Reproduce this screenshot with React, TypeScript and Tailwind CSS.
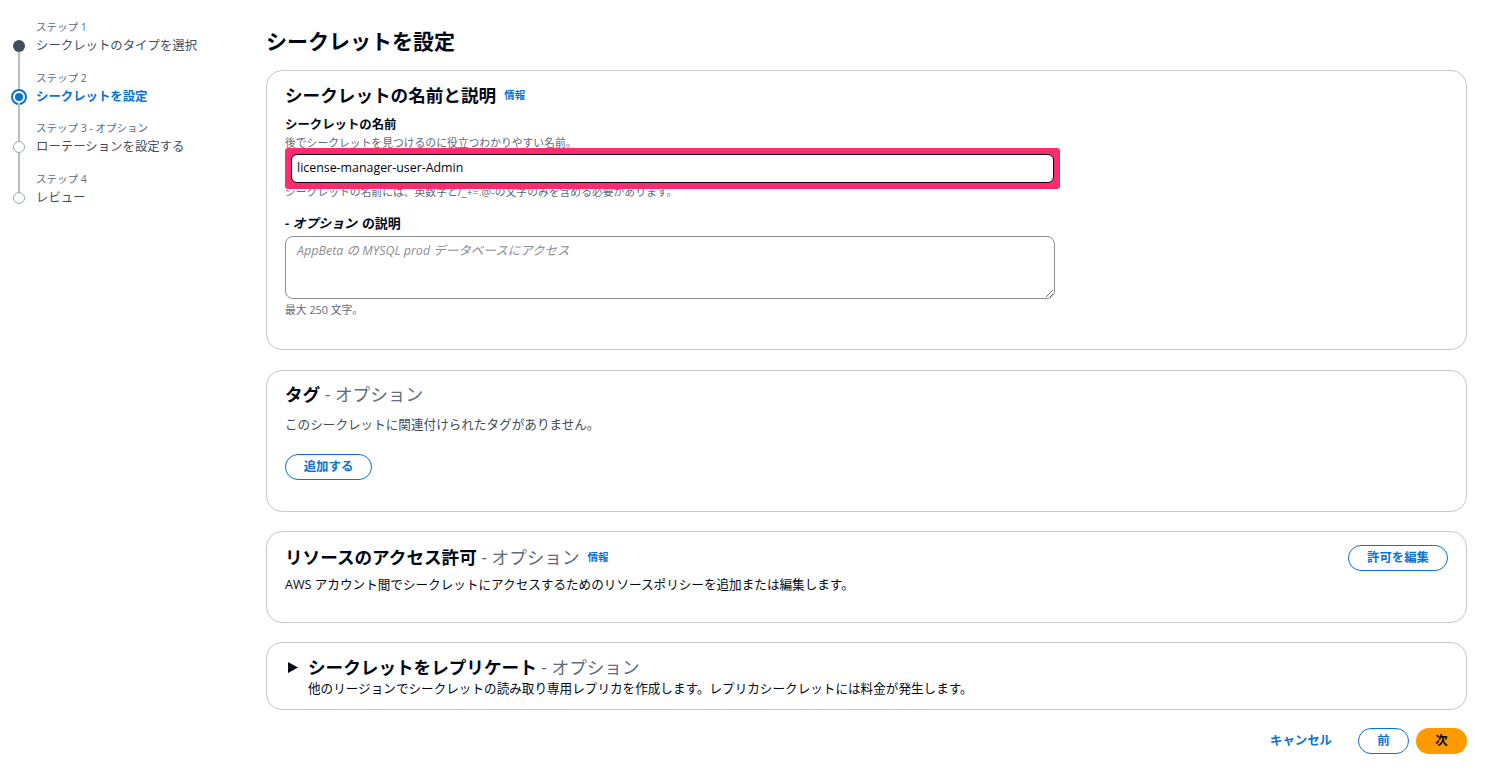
import React from "react";

const FONT = { fontFamily: '"Open Sans", "Noto Sans CJK JP", sans-serif' };

type Step = { small: string; label: string; state: "done" | "current" | "todo" };

const steps: Step[] = [
  { small: "ステップ 1", label: "シークレットのタイプを選択", state: "done" },
  { small: "ステップ 2", label: "シークレットを設定", state: "current" },
  { small: "ステップ 3 - オプション", label: "ローテーションを設定する", state: "todo" },
  { small: "ステップ 4", label: "レビュー", state: "todo" },
];

function Circle({ state }: { state: Step["state"] }) {
  if (state === "done") {
    return <div className="w-[12px] h-[12px] rounded-full bg-[#414d5c] shrink-0" />;
  }
  if (state === "current") {
    return (
      <div className="w-[16px] h-[16px] -my-[2px] rounded-full border-2 border-[#0972d3] bg-white flex items-center justify-center shrink-0">
        <div className="w-[8px] h-[8px] rounded-full bg-[#0972d3]" />
      </div>
    );
  }
  return <div className="w-[12px] h-[12px] rounded-full border-[1.5px] border-[#9ba7b6] bg-white shrink-0" />;
}

function Sidebar() {
  return (
    <div className="w-[266px] shrink-0 pl-[13px] pt-[18px]">
      {steps.map((s, i) => (
        <div key={i} className="flex items-stretch">
          <div className="w-[12px] flex flex-col items-center shrink-0">
            <div className={"flex-1 w-[2px] " + (i === 0 ? "bg-transparent" : "bg-[#b6bec9]")} />
            <Circle state={s.state} />
            <div className={"h-[4px] w-[2px] " + (i === steps.length - 1 ? "bg-transparent" : "bg-[#b6bec9]")} />
          </div>
          <div className={"pl-[11px] " + (i === 0 ? "" : "pt-[12.5px]")}>
            <div className="text-[10.5px] leading-[18px] text-[#5f6b7a]">{s.small}</div>
            <div
              className={
                "text-[12.4px] leading-[20px] " +
                (s.state === "current" ? "font-bold text-[#0972d3]" : "text-[#414d5c]")
              }
            >
              {s.label}
            </div>
          </div>
        </div>
      ))}
    </div>
  );
}

function Info() {
  return <span className="text-[10.5px] font-bold text-[#0972d3] ml-[8px] align-middle">情報</span>;
}

function Card({ children, className = "" }: { children: React.ReactNode; className?: string }) {
  return (
    <div className={"border border-[#c6c6cd] rounded-[16px] px-[18px] bg-white " + className}>{children}</div>
  );
}

export default function App() {
  return (
    <div style={FONT} className="w-[1489px] min-h-[783px] bg-white text-[#000716] flex">
      <Sidebar />
      <div className="flex-1 pr-[22px] pt-[27px]">
        <h1 className="text-[21px] leading-[28px] font-bold">シークレットを設定</h1>

        {/* Card 1 */}
        <Card className="mt-[15px] pt-[12px] pb-[32px]">
          <div className="text-[17.6px] leading-[24px] font-bold flex items-center">
            シークレットの名前と説明
            <Info />
          </div>
          <div className="mt-[9px] text-[12.4px] leading-[18px] font-bold">シークレットの名前</div>
          <div className="mt-[2px] text-[10.8px] leading-[14px] text-[#5f6b7a]">
            後でシークレットを見つけるのに役立つわかりやすい名前。
          </div>
          <div className="relative z-10 mt-[-2px] w-[775px] h-[41px] border-[6px] border-[#fe2c6c] rounded-[3px] bg-[#fe2c6c]">
            <div className="w-full h-full rounded-[6px] border border-[#000716] bg-white flex items-center pl-[5px] text-[12.4px]">
              license-manager-user-Admin
            </div>
          </div>
          <div className="mt-[-4px] text-[10.8px] leading-[14px] text-[#5f6b7a]">
            シークレットの名前には、英数字と/_+=.@-の文字のみを含める必要があります。
          </div>
          <div className="mt-[15px] text-[12.9px] leading-[18px] font-bold flex">
            <span className="italic">- オプション</span>
            <span className="ml-[5px]">の説明</span>
          </div>
          <textarea
            className="mt-[4px] block w-[770px] h-[63px] rounded-[8px] border border-[#8c8c94] px-[11px] py-[4px] text-[12.5px] leading-[20px] placeholder:italic placeholder:text-[#8c8c94] outline-none"
            placeholder="AppBeta の MYSQL prod データベースにアクセス"
          />
          <div className="mt-[4px] text-[10.8px] leading-[14px] text-[#5f6b7a]">最大 250 文字。</div>
        </Card>

        {/* Card 2 */}
        <Card className="mt-[20px] pt-[11px] pb-[31px]">
          <div className="text-[17.6px] leading-[24px]">
            <span className="font-bold">タグ</span>
            <span className="text-[#5f6b7a]"> - オプション</span>
          </div>
          <div className="mt-[10px] text-[12.6px] leading-[18px] text-[#414d5c]">
            このシークレットに関連付けられたタグがありません。
          </div>
          <button className="mt-[20px] w-[87px] h-[26px] rounded-full border-[1.5px] border-[#0972d3] text-[12.4px] font-bold text-[#0972d3] flex items-center justify-center">
            追加する
          </button>
        </Card>

        {/* Card 3 */}
        <Card className="mt-[19px] pt-[13px] pb-[28px]">
          <div className="flex items-start justify-between">
            <div className="text-[17.6px] leading-[24px] flex items-center">
              <span className="font-bold">リソースのアクセス許可</span>
              <span className="text-[#5f6b7a]">&nbsp;- オプション</span>
              <Info />
            </div>
            <button className="w-[100px] h-[26px] rounded-full border-[1.5px] border-[#0972d3] text-[12.4px] font-bold text-[#0972d3] flex items-center justify-center">
              許可を編集
            </button>
          </div>
          <div className="mt-[5px] text-[12.6px] leading-[18px] text-[#000716]">
            AWS アカウント間でシークレットにアクセスするためのリソースポリシーを追加または編集します。
          </div>
        </Card>

        {/* Card 4 */}
        <Card className="mt-[19px] pt-[12px] pb-[12px]">
          <div className="flex items-center">
            <svg width="10" height="11" viewBox="0 0 10 11" className="ml-[3px] mr-[10px] shrink-0">
              <path d="M0 0 L10 5.5 L0 11 Z" fill="#000716" />
            </svg>
            <div className="text-[17.6px] leading-[24px]">
              <span className="font-bold">シークレットをレプリケート</span>
              <span className="text-[#5f6b7a]"> - オプション</span>
            </div>
          </div>
          <div className="mt-[2px] pl-[23px] text-[12.6px] leading-[16px] text-[#000716]">
            他のリージョンでシークレットの読み取り専用レプリカを作成します。レプリカシークレットには料金が発生します。
          </div>
        </Card>

        {/* Footer */}
        <div className="mt-[18px] flex items-center justify-end">
          <button className="text-[12.4px] font-bold text-[#0972d3] mr-[26px]">キャンセル</button>
          <button className="w-[51px] h-[26px] rounded-full border-[1.5px] border-[#0972d3] text-[12.4px] font-bold text-[#0972d3] flex items-center justify-center">
            前
          </button>
          <button className="ml-[7px] w-[51px] h-[26px] rounded-full bg-[#ff9900] text-[12.4px] font-bold text-[#000716] flex items-center justify-center">
            次
          </button>
        </div>
      </div>
    </div>
  );
}
